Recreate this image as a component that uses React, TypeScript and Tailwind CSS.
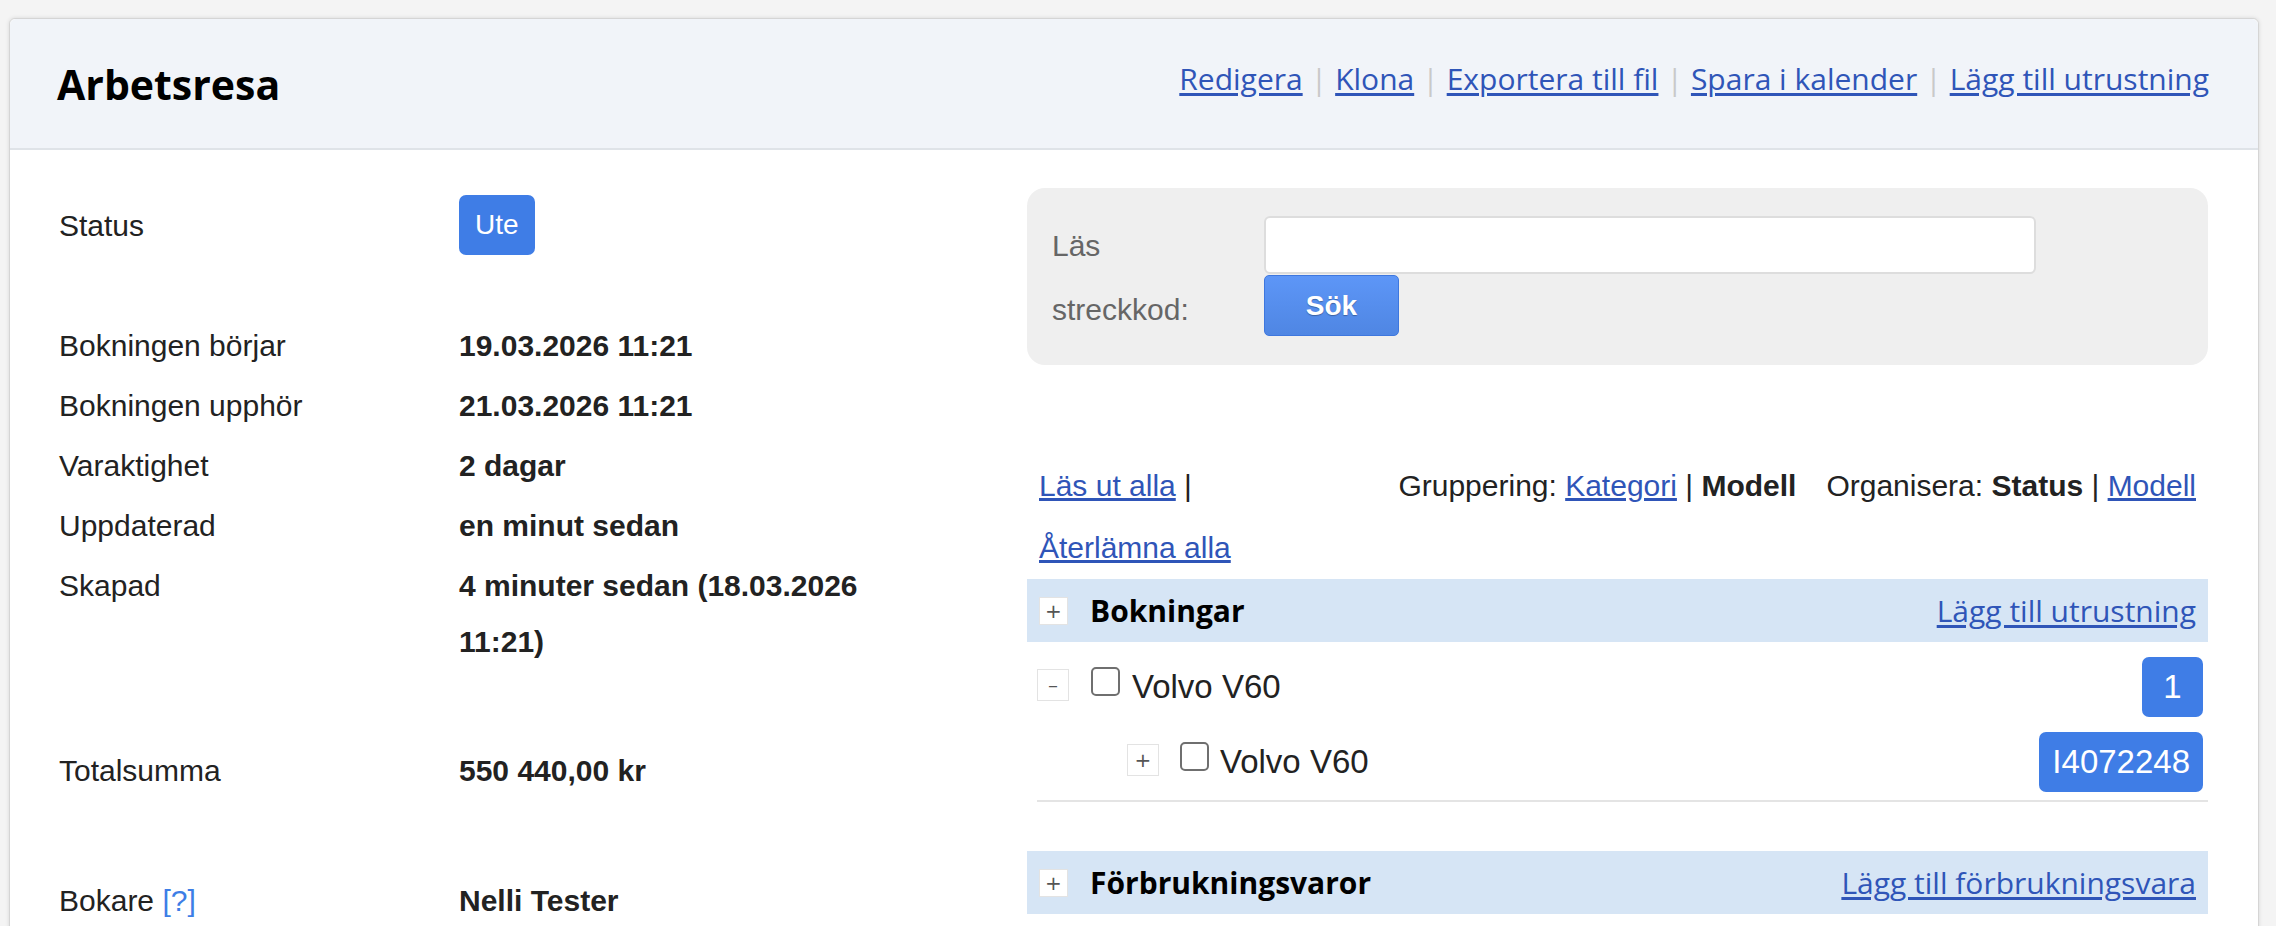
import React from "react";

const hlink = "text-[#2f55b8] underline underline-offset-[3px]";
const blink = "text-[#2f55b8] underline underline-offset-[2px]";

function Sep() {
  return <span className="text-[#c9c9c9] px-[8px]">|</span>;
}

function Toggle({ sign, size }: { sign: string; size: string }) {
  return (
    <div
      className={`${size} shrink-0 border border-[#e3e3e3] bg-white flex items-center justify-center text-[#555] text-[20px] leading-none font-['DejaVu_Sans',sans-serif]`}
    >
      {sign}
    </div>
  );
}

function Checkbox() {
  return <div className="w-[29px] h-[29px] shrink-0 border-2 border-[#6f6f6f] rounded-[5px] bg-white mb-[11px]" />;
}

function Row({ label, value }: { label: React.ReactNode; value: React.ReactNode }) {
  return (
    <div className="flex py-[2px] leading-[56px]">
      <div className="w-[400px] shrink-0">{label}</div>
      <div className="w-[440px] font-bold">{value}</div>
    </div>
  );
}

function SectionBar({ title, action }: { title: string; action: string }) {
  return (
    <div className="h-[63px] bg-[#d6e5f5] flex items-center px-[12px]">
      <Toggle sign="+" size="w-[29px] h-[28px]" />
      <div className="ml-[22px] font-['Open_Sans',sans-serif] font-bold text-[30px] text-black">{title}</div>
      <a className={`ml-auto font-['Open_Sans',sans-serif] text-[30px] ${hlink}`}>{action}</a>
    </div>
  );
}

export default function App() {
  return (
    <div className="h-[926px] overflow-hidden bg-[#f4f4f4] pt-[18px] pl-[9px] pr-[17px] font-['Liberation_Sans',Arial,sans-serif]">
      <div className="bg-white border border-[#d5d5d5] rounded-[6px] shadow-[0_0_4px_rgba(0,0,0,0.12)]">
        {/* Header */}
        <div className="h-[131px] bg-[#f1f4f9] border-b-2 border-[#dfe3e8] rounded-t-[6px] flex justify-between items-start pl-[47px] pr-[49px] pt-[45px]">
          <h1 className="font-['Open_Sans',sans-serif] font-bold text-[41px] leading-[41px] text-black">Arbetsresa</h1>
          <div className="font-['Open_Sans',sans-serif] text-[30px] leading-[30px] whitespace-nowrap">
            <a className={hlink}>Redigera</a>
            <Sep />
            <a className={hlink}>Klona</a>
            <Sep />
            <a className={hlink}>Exportera till fil</a>
            <Sep />
            <a className={hlink}>Spara i kalender</a>
            <Sep />
            <a className={hlink}>Lägg till utrustning</a>
          </div>
        </div>

        {/* Body */}
        <div className="flex items-start pl-[49px] pr-[50px] pb-[60px] text-[30px] text-[#222]">
          {/* Left column */}
          <div className="flex-1 pt-[45px]">
            <div className="flex items-center h-[60px]">
              <div className="w-[400px] shrink-0">Status</div>
              <span className="bg-[#3f7de6] text-white text-[28px] leading-[60px] h-[60px] px-[16px] rounded-[7px]">Ute</span>
            </div>
            <div className="mt-[61px]">
              <Row label="Bokningen börjar" value="19.03.2026 11:21" />
              <Row label="Bokningen upphör" value="21.03.2026 11:21" />
              <Row label="Varaktighet" value="2 dagar" />
              <Row label="Uppdaterad" value="en minut sedan" />
              <Row label="Skapad" value="4 minuter sedan (18.03.2026 11:21)" />
            </div>
            <div className="mt-[69px]">
              <Row label="Totalsumma" value="550 440,00 kr" />
            </div>
            <div className="mt-[70px]">
              <Row
                label={
                  <span>
                    Bokare <span className="text-[#3d7ee6]">[?]</span>
                  </span>
                }
                value="Nelli Tester"
              />
            </div>
          </div>

          {/* Right column */}
          <div className="w-[1181px] shrink-0 pt-[38px]">
            <div className="h-[177px] rounded-[18px] bg-[#efefef] flex px-[25px] pt-[28px]">
              <div className="w-[212px] shrink-0 pr-[40px] text-[#666] leading-[64px] -mt-[2px]">Läs streckkod:</div>
              <div className="flex flex-col items-start">
                <input className="w-[772px] h-[58px] border-2 border-[#dddddd] rounded-[6px] bg-white outline-none" />
                <button className="mt-[1px] w-[135px] h-[61px] rounded-[5px] border border-[#3e77de] bg-linear-to-b from-[#5d96f7] to-[#4f86e3] text-white font-bold text-[28px] [text-shadow:0_1px_1px_rgba(0,0,0,0.3)]">
                  Sök
                </button>
              </div>
            </div>

            <div className="mt-[90px] flex justify-between items-start px-[12px] leading-[62px]">
              <div className="w-[220px]">
                <a className={`${blink} whitespace-nowrap`}>Läs ut alla</a> |{" "}
                <a className={`${blink} whitespace-nowrap`}>Återlämna alla</a>
              </div>
              <div className="whitespace-nowrap">
                Gruppering: <a className={blink}>Kategori</a> | <b>Modell</b>
                <span className="ml-[30px]">
                  Organisera: <b>Status</b> | <a className={blink}>Modell</a>
                </span>
              </div>
            </div>

            <SectionBar title="Bokningar" action="Lägg till utrustning" />

            <div className="ml-[10px] pr-[5px] pt-[15px] text-[33px]">
              <div className="flex items-center h-[60px]">
                <div className="mb-[4px]">
                  <Toggle sign="–" size="w-[32px] h-[32px]" />
                </div>
                <div className="ml-[22px]">
                  <Checkbox />
                </div>
                <div className="ml-[12px]">Volvo V60</div>
                <span className="ml-auto bg-[#3f7de6] text-white leading-[60px] h-[60px] min-w-[61px] px-[13px] text-center rounded-[7px]">1</span>
              </div>
              <div className="flex items-center h-[60px] mt-[15px] pl-[90px]">
                <div className="mb-[4px]">
                  <Toggle sign="+" size="w-[32px] h-[32px]" />
                </div>
                <div className="ml-[21px]">
                  <Checkbox />
                </div>
                <div className="ml-[11px]">Volvo V60</div>
                <span className="ml-auto bg-[#3f7de6] text-white leading-[60px] h-[60px] min-w-[61px] px-[13px] text-center rounded-[7px]">I4072248</span>
              </div>
              <div className="mt-[8px] border-t-2 border-[#e4e4e4] -mr-[5px]" />
            </div>

            <div className="mt-[49px]">
              <SectionBar title="Förbrukningsvaror" action="Lägg till förbrukningsvara" />
            </div>
          </div>
        </div>
      </div>
    </div>
  );
}
